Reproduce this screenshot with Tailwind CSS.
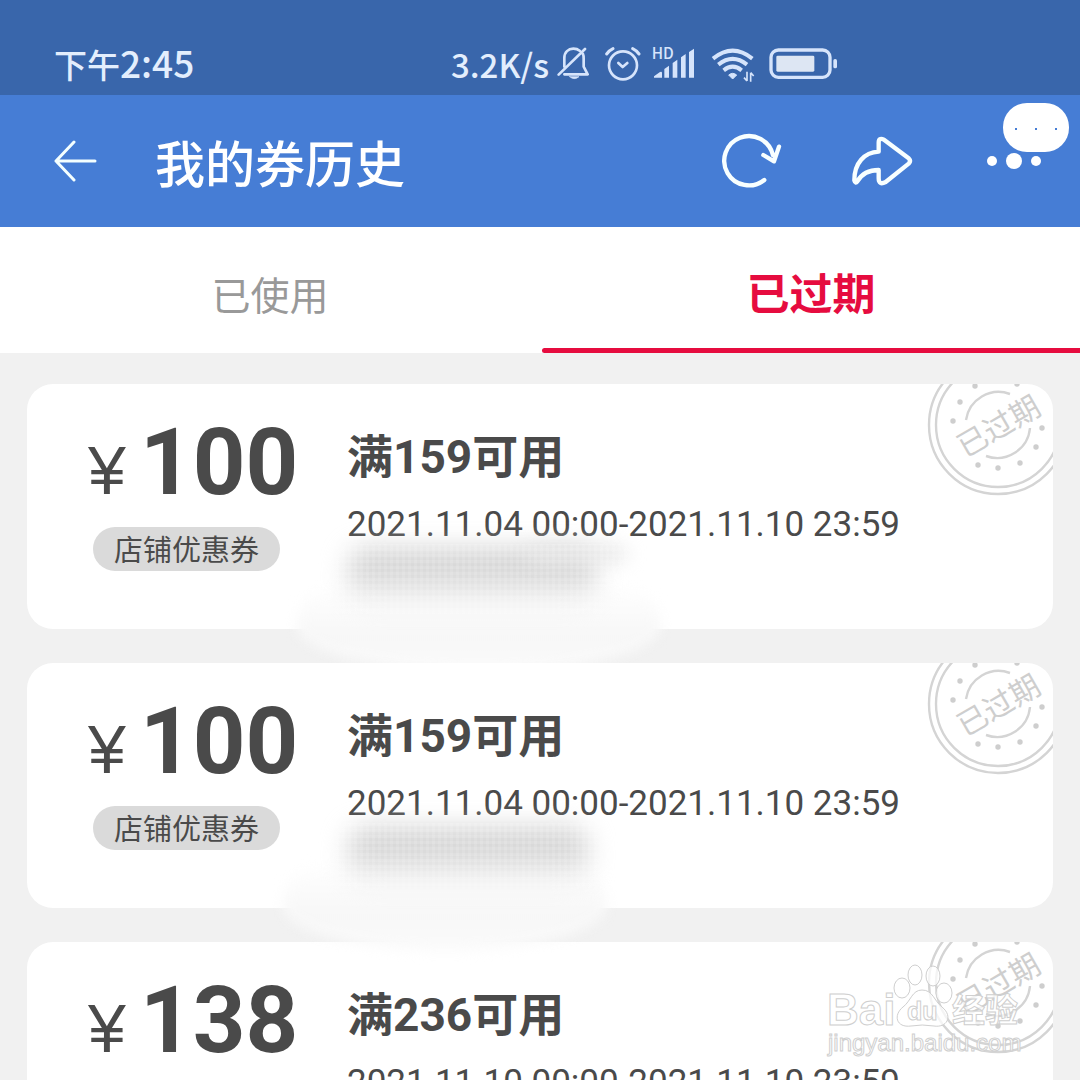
<!DOCTYPE html>
<html lang="zh-CN">
<head>
<meta charset="utf-8">
<meta name="viewport" content="width=device-width, initial-scale=1">
<title>我的券历史</title>
<script src="https://cdn.jsdelivr.net/npm/@tailwindcss/browser@4"></script>
</head>
<body class="bg-[#f1f1f1] font-[Roboto,'Noto_Sans_CJK_SC',sans-serif] text-[#4a4a4a]">
<svg class="hidden" aria-hidden="true">
  <symbol id="stamp" viewBox="0 0 144 144">
    <g fill="none" stroke="#d4d4d4" stroke-width="2.4">
      <circle cx="72" cy="72" r="69"/>
      <circle cx="72" cy="72" r="62"/>
      <path d="M40 67A33 33 0 0 1 84 41"/>
      <path d="M60 103A33 33 0 0 0 104 75"/>
    </g>
    <g fill="#cecece">
      <circle cx="49" cy="33" r="2.7"/><circle cx="34" cy="49" r="2.7"/><circle cx="27" cy="68" r="2.7"/>
      <circle cx="52" cy="112" r="2.7"/><circle cx="72" cy="115" r="2.7"/><circle cx="94" cy="110" r="2.7"/>
      <circle cx="110" cy="94" r="2.7"/><circle cx="116" cy="75" r="2.7"/><circle cx="91" cy="31" r="2.7"/>
      <text x="72" y="84" text-anchor="middle" font-size="30" font-family="Noto Sans CJK SC, sans-serif" transform="rotate(-30 72 72)">已过期</text>
    </g>
  </symbol>
</svg>
<div class="relative h-screen overflow-hidden">

  <div class="flex h-[95px] items-end justify-between bg-[#3966ab] pb-[6px] pl-[54px] pr-[243px] font-['Noto_Sans_CJK_SC',sans-serif] font-medium text-[#e3eefd]">
    <div class="text-[33px] leading-[50px]">下午<span class="text-[37px]">2:45</span></div>
    <div class="flex items-center">
      <span class="pr-2 text-[33px] leading-[50px]">3.2K/s</span>
      <svg class="h-9 w-[34px]" viewBox="54 80 102 108" fill="none" stroke="#d6e4fb" stroke-width="8" stroke-linecap="round" stroke-linejoin="round">
        <path d="M59 166L138 89M76 142V116C76 98 88 88 103 88C111 88 117 90 122 94M132 104C134 108 134 112 134 118V142L146 165H76"/><path d="M92 172H120Q106 184 92 172Z" fill="#d6e4fb" stroke-width="2"/>
      </svg>
      <svg class="ml-[14px] h-9 w-9" viewBox="198 79 108 108" fill="none" stroke="#d6e4fb" stroke-width="8" stroke-linecap="round" stroke-linejoin="round">
        <circle cx="252" cy="137" r="42"/><path d="M238 130L251 142L265 130"/><path d="M203 103Q211 92 222 87M281 87Q292 92 300 103" stroke-width="9"/>
      </svg>
      <svg class="ml-3 h-9 w-[42px] overflow-visible" viewBox="342 79 126 108" fill="#d6e4fb">
        <text x="338" y="117" font-size="46" font-weight="500" font-family="Noto Sans CJK SC, sans-serif">HD</text>
        <path d="M345 174V170L363 157Q369 154 369 160V174ZM376 174V148L390 138V174ZM401 174V130L415 120V174ZM426 174V113L440 103V174ZM450 174V97L465 87V174Z"/>
      </svg>
      <svg class="ml-4 h-9 w-[44px]" viewBox="511 79 132 108" fill="none" stroke="#d6e4fb" stroke-width="12">
        <path d="M517 117Q576 69 635 117M533 135Q576 100 619 135M549 152Q576 130 603 152"/>
        <path d="M564 166Q576 156 588 166L576 178Z" fill="#d6e4fb" stroke-width="3"/>
        <path d="M619 156V184M610 174L619 184M630 186V159M630 159L639 169" stroke-width="5"/>
      </svg>
      <svg class="ml-[14px] h-9 w-[68px]" viewBox="686 79 204 108" fill="#d6e4fb">
        <rect x="692" y="91" width="177" height="82" rx="22" fill="none" stroke="#d6e4fb" stroke-width="10"/>
        <rect x="708" y="108" width="114" height="48" rx="4" fill="#dde6f3"/><rect x="879" y="118" width="11" height="28" rx="5"/>
      </svg>
    </div>
  </div>

  <header class="relative flex h-[132px] items-center bg-[#467dd5] pl-[54px] pr-[38px]">
    <button type="button" aria-label="返回" class="w-[101px]">
      <svg class="h-11 w-11" viewBox="0 0 44 44" fill="none" stroke="#f4ffff" stroke-width="3" stroke-linecap="round" stroke-linejoin="round"><path d="M20 3L2 22L20 41M2 22H41"/></svg>
    </button>
    <h1 class="grow font-['Noto_Sans_CJK_SC',sans-serif] text-[50px] font-medium leading-[70px] text-white">我的券历史</h1>
    <button type="button" aria-label="刷新">
      <svg class="h-[60px] w-[62px]" viewBox="93 123 186 180" fill="none" stroke="#f8ffff" stroke-width="13" stroke-linecap="round" stroke-linejoin="round"><path d="M220 270A74 74 0 1 1 246 196M217 195L249 214L264 170"/></svg>
    </button>
    <button type="button" aria-label="分享" class="ml-[68px]">
      <svg class="h-[60px] w-[62px]" viewBox="486 123 186 180" fill="none" stroke="#f8ffff" stroke-width="13" stroke-linecap="round" stroke-linejoin="round"><path d="M493 271C493 219 523 187 566 185V158Q566 141 582 149L656 205Q664 213 656 221L587 276Q566 287 566 265V240C535 240 515 252 502 274Q496 282 493 271Z"/></svg>
    </button>
    <button type="button" aria-label="更多" class="ml-[72px]">
      <svg class="h-[60px] w-[56px]" viewBox="0 0 56 60" fill="#fff"><circle cx="6" cy="30" r="5"/><circle cx="28" cy="30" r="8"/><circle cx="50" cy="30" r="5"/></svg>
    </button>
    <div class="absolute right-[11px] top-2 flex h-[49px] w-[66px] items-center justify-center gap-[18px] rounded-[24px] bg-white pt-[2px]">
      <i class="size-[2px] bg-[#467dd5]"></i><i class="size-[2px] bg-[#467dd5]"></i><i class="size-[2px] bg-[#467dd5]"></i>
    </div>
  </header>

  <nav class="grid h-[126px] grid-cols-2 bg-white font-['Noto_Sans_CJK_SC',sans-serif]">
    <a href="#used" class="flex items-center justify-center pt-[6px] text-[39px] leading-[56px] text-[#999]">已使用</a>
    <a href="#expired" class="flex flex-col justify-end pl-[2px] text-center text-[43px] font-bold leading-[56px] text-[#e60c3f]">已过期<span class="mt-[29px] h-[5px] rounded-l-[3px] bg-[#e60c3f]"></span></a>
  </nav>

  <main class="flex flex-col gap-[34px] px-[27px] pt-[31px]">
    <article class="relative z-10 flex h-[245px] rounded-[26px] bg-white">
      <div class="w-[320px] shrink-0 pl-[61px] pt-[25px]">
        <div class="flex h-[108px] items-baseline"><span class="w-[52px] font-['Liberation_Sans',sans-serif] text-[68px] leading-[108px]">¥</span><b class="text-[92px] leading-[108px]">100</b></div>
        <span class="ml-[5px] mt-[10px] flex h-[44px] w-[187px] items-center justify-center rounded-[22px] bg-[#dadada] font-['Noto_Sans_CJK_SC',sans-serif] text-[29px]">店铺优惠券</span>
      </div>
      <div class="grow pt-[43px]">
        <h2 class="text-[46px] font-bold leading-[60px]">满159可用</h2>
        <p class="mt-[18px] text-[35px] leading-[40px]">2021.11.04 00:00-2021.11.10 23:59</p>
      </div>
      <div class="absolute right-0 top-0 h-[130px] w-[130px] overflow-hidden rounded-tr-[26px]"><svg class="absolute left-[3px] top-[-31px] h-[144px] w-[144px]" role="img" aria-label="已过期"><use href="#stamp"/></svg></div>
      <div class="absolute left-[270px] top-[200px] h-[88px] w-[364px] rounded-b-[50%] rounded-t-[40px] bg-linear-to-b from-white via-[#f7f7f7] via-60% to-[#fbfbfb] blur-[6px]"></div>
      <div class="absolute left-[320px] top-[164px] h-[56px] w-[250px] rounded-[20px] bg-linear-to-b from-[#cecece] via-[#dadada] to-[#f6f6f6] blur-[12px]"></div>
      <div class="absolute left-[500px] top-[162px] h-[16px] w-[100px] rounded-[8px] bg-[#e6e6e6] blur-[9px]"></div>
      <div class="absolute left-[300px] top-[160px] h-[70px] w-[320px] bg-[repeating-linear-gradient(90deg,transparent_0_3px,rgba(255,255,255,.12)_3px_6px),repeating-linear-gradient(0deg,transparent_0_3px,rgba(255,255,255,.12)_3px_6px)]"></div>
    </article>

    <article class="relative z-10 flex h-[245px] rounded-[26px] bg-white">
      <div class="w-[320px] shrink-0 pl-[61px] pt-[25px]">
        <div class="flex h-[108px] items-baseline"><span class="w-[52px] font-['Liberation_Sans',sans-serif] text-[68px] leading-[108px]">¥</span><b class="text-[92px] leading-[108px]">100</b></div>
        <span class="ml-[5px] mt-[10px] flex h-[44px] w-[187px] items-center justify-center rounded-[22px] bg-[#dadada] font-['Noto_Sans_CJK_SC',sans-serif] text-[29px]">店铺优惠券</span>
      </div>
      <div class="grow pt-[43px]">
        <h2 class="text-[46px] font-bold leading-[60px]">满159可用</h2>
        <p class="mt-[18px] text-[35px] leading-[40px]">2021.11.04 00:00-2021.11.10 23:59</p>
      </div>
      <div class="absolute right-0 top-0 h-[130px] w-[130px] overflow-hidden rounded-tr-[26px]"><svg class="absolute left-[3px] top-[-31px] h-[144px] w-[144px]" role="img" aria-label="已过期"><use href="#stamp"/></svg></div>
      <div class="absolute left-[256px] top-[200px] h-[88px] w-[324px] rounded-b-[50%] rounded-t-[40px] bg-linear-to-b from-white via-[#f7f7f7] via-60% to-[#fbfbfb] blur-[6px]"></div>
      <div class="absolute left-[320px] top-[164px] h-[56px] w-[242px] rounded-[20px] bg-linear-to-b from-[#cecece] via-[#dadada] to-[#f6f6f6] blur-[12px]"></div>
      <div class="absolute left-[300px] top-[160px] h-[66px] w-[300px] bg-[repeating-linear-gradient(90deg,transparent_0_3px,rgba(255,255,255,.12)_3px_6px),repeating-linear-gradient(0deg,transparent_0_3px,rgba(255,255,255,.12)_3px_6px)]"></div>
    </article>

    <article class="relative flex h-[245px] shrink-0 rounded-[26px] bg-white">
      <div class="w-[320px] shrink-0 pl-[61px] pt-[25px]">
        <div class="flex h-[108px] items-baseline"><span class="w-[52px] font-['Liberation_Sans',sans-serif] text-[68px] leading-[108px]">¥</span><b class="text-[92px] leading-[108px]">138</b></div>
      </div>
      <div class="grow pt-[43px]">
        <h2 class="text-[46px] font-bold leading-[60px]">满236可用</h2>
        <p class="mt-[18px] text-[35px] leading-[40px]">2021.11.10 00:00-2021.11.10 23:59</p>
      </div>
      <div class="absolute right-0 top-0 h-[130px] w-[130px] overflow-hidden rounded-tr-[26px]"><svg class="absolute left-[3px] top-[-31px] h-[144px] w-[144px]" role="img" aria-label="已过期"><use href="#stamp"/></svg></div>
    </article>
  </main>

  <svg class="absolute bottom-[20px] right-[50px] z-20 h-[100px] w-[206px]" viewBox="0 0 206 100" fill="#fff" fill-opacity=".75" stroke="#cfcfcf" stroke-width="1" font-family="Liberation Sans, Noto Sans CJK SC, sans-serif" font-weight="700">
    <text x="3" y="65" font-size="44">Bai</text>
    <ellipse cx="78" cy="28" rx="8" ry="10"/><ellipse cx="91" cy="15" rx="7" ry="10"/><ellipse cx="109" cy="16" rx="7" ry="10"/><ellipse cx="120" cy="33" rx="8" ry="10"/>
    <path d="M98 30C109 30 110 41 118 47C130 57 122 68 110 66Q98 64 87 66C72 68 69 55 79 47C87 41 88 30 98 30Z"/>
    <text x="83" y="60" font-size="25">du</text>
    <text x="128" y="62" font-size="33" font-family="Noto Sans CJK SC, sans-serif">经验</text>
    <text x="4" y="91" font-size="24" font-weight="400">jingyan.baidu.com</text>
  </svg>
</div>
</body>
</html>
